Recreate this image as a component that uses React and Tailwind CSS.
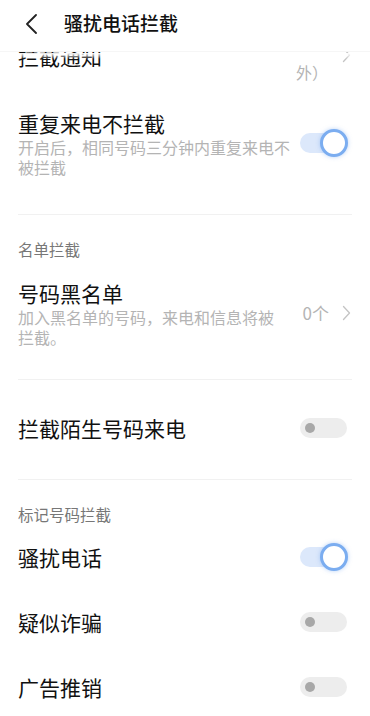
import React from "react";

const font = { fontFamily: '"Noto Sans CJK SC", "Noto Sans", sans-serif' };

function Chevron({ className }) {
  return (
    <svg viewBox="0 0 8 16" className={className} fill="none" stroke="currentColor" strokeWidth="1.3" strokeLinecap="round" strokeLinejoin="round">
      <path d="M1 1.5 L7 8 L1 14.5" />
    </svg>
  );
}

function Toggle({ on }) {
  if (on) {
    return (
      <div className="relative w-[48px] h-[28px] shrink-0">
        <div className="absolute left-0 top-[4px] w-[42px] h-[20px] rounded-full bg-[#dce8fb]" />
        <div className="absolute right-0 top-0 w-[28px] h-[28px] rounded-full bg-white border-[3px] border-[#7badf0] shadow-[0_0_4px_rgba(120,170,240,0.5)]" />
      </div>
    );
  }
  return (
    <div className="relative w-[48px] h-[28px] shrink-0">
      <div className="absolute left-0 top-[4px] w-[47px] h-[20px] rounded-full bg-[#ededed]" />
      <div className="absolute left-[5px] top-[9px] w-[10px] h-[10px] rounded-full bg-[#a8a8a8]" />
    </div>
  );
}

function SwitchRow({ title, sub, on, pt, pb }) {
  return (
    <div className={`flex items-center pl-[18px] pr-[22px] ${pt} ${pb}`}>
      <div className="flex-1 min-w-0">
        <div className="text-[21px] leading-[28px] text-[#111]">{title}</div>
        {sub && (
          <div className="text-[16px] leading-[20px] text-[#b4b4b4] w-[276px]">{sub}</div>
        )}
      </div>
      <Toggle on={on} />
    </div>
  );
}

function SectionTitle({ children }) {
  return (
    <div className="pl-[18px] pt-[24px] text-[15.5px] leading-[20px] text-[#777]">
      {children}
    </div>
  );
}

function Divider() {
  return <div className="mx-[18px] h-px bg-[#f1f1f1]" />;
}

export default function App() {
  return (
    <div className="relative w-[370px] h-[716px] bg-white overflow-hidden" style={font}>
      {/* 顶栏 */}
      <div className="h-[52px] flex items-center relative z-10 bg-white border-b border-[#f6f6f6]">
        <svg viewBox="0 0 12 20" className="w-[12px] h-[20px] ml-[25px] -mt-[4px] text-[#222]" fill="none" stroke="currentColor" strokeWidth="1.8" strokeLinecap="round" strokeLinejoin="round">
          <path d="M11 1 L2 10 L11 19" />
        </svg>
        <div className="ml-[27px] -mt-[5px] text-[19px] font-medium text-[#111]">骚扰电话拦截</div>
      </div>
      {/* 顶栏下的渐隐 */}
      <div className="absolute left-0 right-0 top-[53px] h-[6px] z-10 bg-gradient-to-b from-white to-white/0" />

      {/* 列表（已滚动） */}
      <div className="h-[664px] overflow-hidden">
        <div className="-mt-[10px]">
          <div className="flex items-start pl-[18px] pr-[19px] pb-[10px]">
            <div className="flex-1 text-[21px] leading-[28px] text-[#111]">拦截通知</div>
            <div className="mt-[20px] text-[16px] leading-[20px] text-[#b4b4b4]">外）</div>
            <Chevron className="w-[9px] h-[16px] ml-[14px] mt-[5px] text-[#c4c4c4]" />
          </div>

          <SwitchRow title="重复来电不拦截" sub="开启后，相同号码三分钟内重复来电不被拦截" on pt="pt-[17px]" pb="pb-[37px]" />

          <Divider />
          <SectionTitle>名单拦截</SectionTitle>

          <div className="flex items-center pl-[18px] pr-[19px] pt-[20px] pb-[32px]">
            <div className="flex-1 min-w-0">
              <div className="text-[21px] leading-[28px] text-[#111]">号码黑名单</div>
              <div className="text-[16px] leading-[20px] text-[#b4b4b4] w-[262px]">加入黑名单的号码，来电和信息将被拦截。</div>
            </div>
            <div className="text-[17px] text-[#b4b4b4]">0个</div>
            <Chevron className="w-[9px] h-[16px] ml-[13px] text-[#c4c4c4]" />
          </div>

          <Divider />
          <SwitchRow title="拦截陌生号码来电" pt="pt-[34px]" pb="pb-[37px]" />

          <Divider />
          <SectionTitle>标记号码拦截</SectionTitle>

          <SwitchRow title="骚扰电话" on pt="pt-[19px]" pb="pb-[18px]" />
          <SwitchRow title="疑似诈骗" pt="pt-[19px]" pb="pb-[18px]" />
          <SwitchRow title="广告推销" pt="pt-[19px]" pb="pb-[18px]" />
        </div>
      </div>
    </div>
  );
}
